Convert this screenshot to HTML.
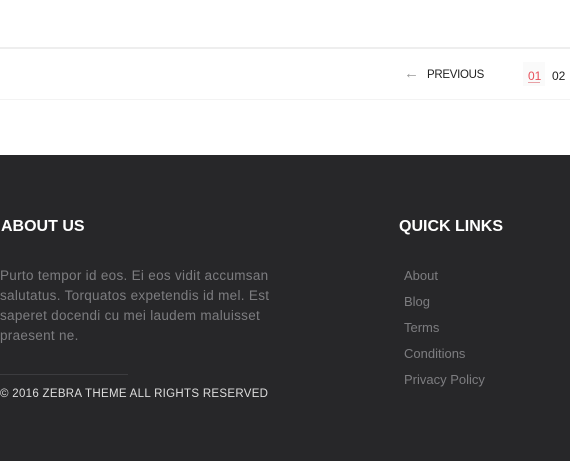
<!DOCTYPE html>
<html><head><style>
body{margin:0;width:570px;height:461px;overflow:hidden;background:#fff;font-family:"Liberation Sans",sans-serif;position:relative}
.a{position:absolute;white-space:nowrap}
</style></head><body>
<div class="a" style="left:0;top:47px;width:570px;height:2px;background:#eee"></div>
<div class="a" style="left:0;top:99px;width:570px;height:1px;background:#f3f3f3"></div>
<div class="a" style="left:404px;top:65px;font-size:15px;color:#999">&#8592;</div>
<div class="a" style="left:427px;top:69px;font-size:11.5px;color:#222;letter-spacing:-0.3px">PREVIOUS</div>
<div class="a" style="left:523px;top:62px;width:22px;height:24px;background:#fafafa"></div>
<div class="a" style="left:528px;top:69px;font-size:12px;color:#e8505b">01</div>
<div class="a" style="left:528px;top:82px;width:12px;height:1px;background:#e8a0a5"></div>
<div class="a" style="left:552px;top:69px;font-size:12px;color:#222">02</div>
<div class="a" style="left:0;top:155px;width:570px;height:306px;background:#272729"></div>
<div class="a" style="left:1px;top:218px;font-size:16px;font-weight:bold;color:#fff">ABOUT US</div>
<div class="a" style="left:399px;top:218px;font-size:16px;font-weight:bold;color:#fff">QUICK LINKS</div>
<div class="a" style="left:0;top:266px;font-size:13.5px;line-height:20px;color:#7d7d80;letter-spacing:0.3px">Purto tempor id eos. Ei eos vidit accumsan<br>salutatus. Torquatos expetendis id mel. Est<br>saperet docendi cu mei laudem maluisset<br>praesent ne.</div>
<div class="a" style="left:0;top:374px;width:128px;height:1px;background:#3c3c3f"></div>
<div class="a" style="left:0;top:388px;font-size:11.5px;color:#ddd;letter-spacing:0.3px">© 2016 ZEBRA THEME ALL RIGHTS RESERVED</div>
<div class="a" style="left:404px;top:263px;font-size:13px;line-height:26px;color:#7d7d80;letter-spacing:0">About<br>Blog<br>Terms<br>Conditions<br>Privacy Policy</div>
</body></html>
